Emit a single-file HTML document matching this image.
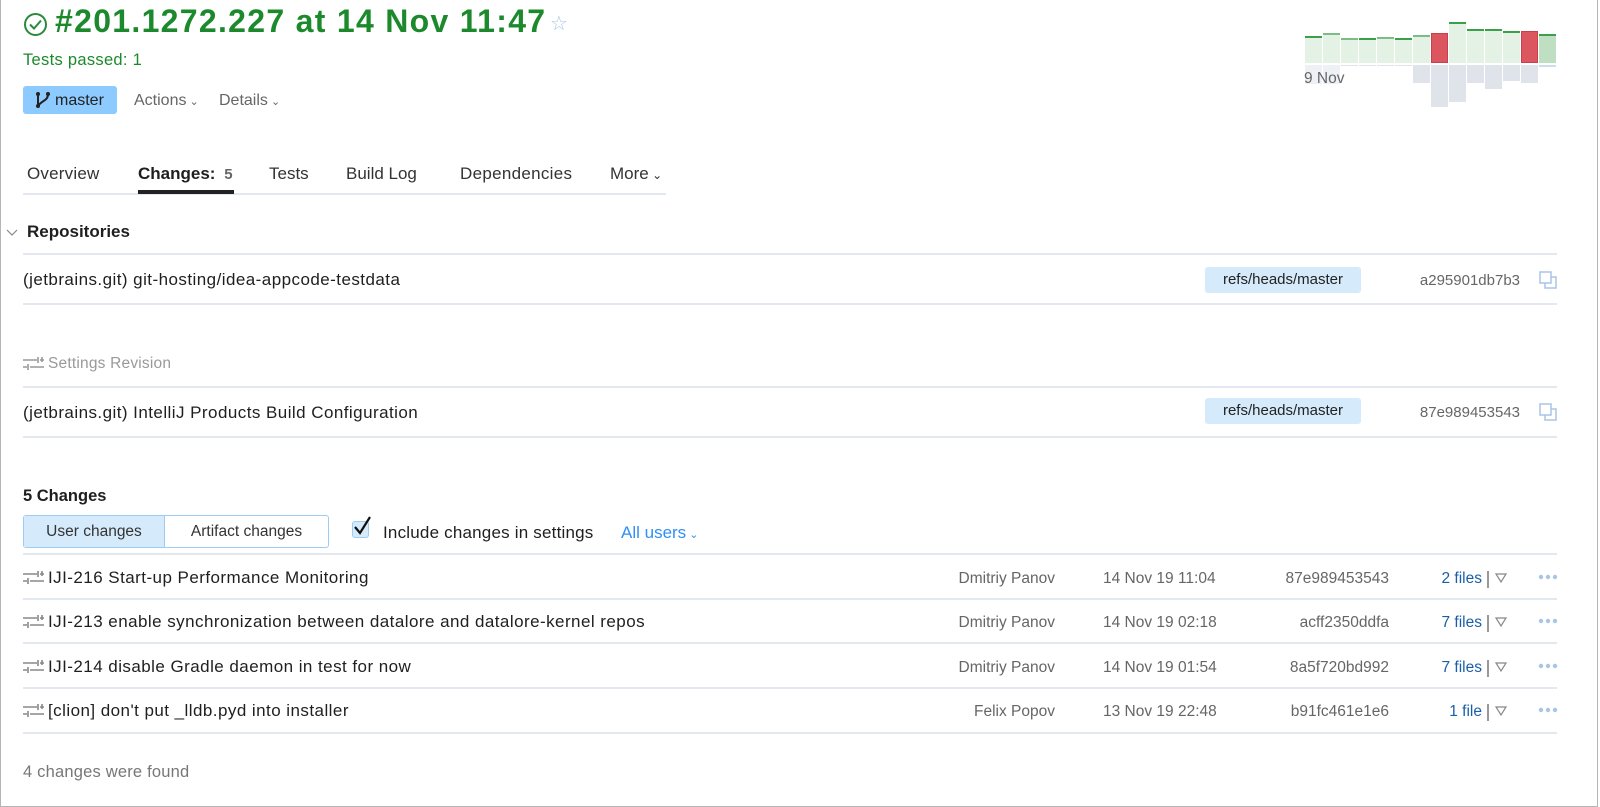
<!DOCTYPE html>
<html><head><meta charset="utf-8"><style>
*{margin:0;padding:0;box-sizing:border-box}
html,body{width:1600px;height:807px;overflow:hidden;background:#fff;font-family:"Liberation Sans",sans-serif;color:#1f1f1f}
.frame{position:absolute;left:0;top:0;width:1598px;height:807px;border:1px solid #b5b5b5;border-top:none}
.a{position:absolute;white-space:nowrap}
.line{position:absolute;left:23px;width:1534px;height:2px;background:#e3e8f0}
.badge{position:absolute;left:1205px;width:156px;height:26px;background:#d5ebfc;border-radius:3px;font-size:15px;line-height:26px;text-align:center;color:#222}
.hash{position:absolute;right:80px;font-size:15px;color:#666}
.copy{position:absolute;left:1539px;width:18px;height:18px}
.row{font-size:17px;letter-spacing:0.45px}
.auth{position:absolute;right:545px;font-size:15.5px;color:#666}
.date{position:absolute;left:1103px;font-size:15.5px;color:#666}
.rh{position:absolute;right:211px;font-size:15.5px;color:#666}
.files{position:absolute;right:118px;font-size:15.5px;color:#1b5ea8}
.sep{position:absolute;left:1487px;width:2px;height:17px;background:#999}
.tri{position:absolute;left:1495px}
.dots{position:absolute;left:1538px}
.bar{position:absolute;width:17px}
</style></head><body>
<div class="frame"></div>

<svg class="a" style="left:23px;top:12px" width="25" height="25" viewBox="0 0 25 25"><circle cx="12.5" cy="12.5" r="10.5" fill="none" stroke="#2a8a3c" stroke-width="2"/><path d="M7 12.5l4 4 7-8" fill="none" stroke="#2a8a3c" stroke-width="2"/></svg>
<div class="a" style="left:55px;top:3px;font-size:32px;font-weight:bold;color:#1c8a2c;letter-spacing:1.3px">#201.1272.227 at 14 Nov 11:47</div>
<div class="a" style="left:550px;top:11px;font-size:20px;color:#a9c5e6">☆</div>
<div class="a" style="left:23px;top:51px;font-size:16.5px;color:#1c8a2c;letter-spacing:0.3px">Tests passed: 1</div>
<div class="a" style="left:23px;top:86px;width:94px;height:28px;background:#8ccaff;border-radius:3px"></div>
<svg class="a" style="left:34px;top:90px" width="18" height="20" viewBox="0 0 18 20"><circle cx="4" cy="4" r="2" fill="#222"/><circle cx="4" cy="16" r="2" fill="#222"/><circle cx="14" cy="4" r="2" fill="#222"/><path d="M4 4v12M14 4c0 7-6 6-10 12" fill="none" stroke="#222" stroke-width="2"/></svg>
<div class="a" style="left:55px;top:92px;font-size:16px;color:#222">master</div>
<div class="a" style="left:134px;top:92px;font-size:16px;color:#666">Actions<span style="font-size:11px"> ⌄</span></div>
<div class="a" style="left:219px;top:92px;font-size:16px;color:#666">Details<span style="font-size:11px"> ⌄</span></div>

<div class="bar" style="left:1305px;top:36px;height:27px;background:#e4f1e5;border-top:2px solid #3aa14a"></div>
<div class="bar" style="left:1323px;top:33px;height:30px;background:#e4f1e5;border-top:2px solid #7bbd85"></div>
<div class="bar" style="left:1341px;top:38px;height:25px;background:#e4f1e5;border-top:2px solid #7bbd85"></div>
<div class="bar" style="left:1359px;top:38px;height:25px;background:#e4f1e5;border-top:2px solid #3aa14a"></div>
<div class="bar" style="left:1377px;top:37px;height:26px;background:#e4f1e5;border-top:2px solid #7bbd85"></div>
<div class="bar" style="left:1395px;top:38px;height:25px;background:#e4f1e5;border-top:2px solid #3aa14a"></div>
<div class="bar" style="left:1413px;top:35px;height:28px;background:#e4f1e5;border-top:2px solid #7bbd85"></div>
<div class="bar" style="left:1431px;top:33px;height:30px;background:#dc5660;border:1px solid #c9404c"></div>
<div class="bar" style="left:1449px;top:22px;height:41px;background:#e4f1e5;border-top:2px solid #3aa14a"></div>
<div class="bar" style="left:1467px;top:29px;height:34px;background:#e4f1e5;border-top:2px solid #3aa14a"></div>
<div class="bar" style="left:1485px;top:29px;height:34px;background:#e4f1e5;border-top:2px solid #3aa14a"></div>
<div class="bar" style="left:1503px;top:31px;height:32px;background:#e4f1e5;border-top:2px solid #3aa14a"></div>
<div class="bar" style="left:1521px;top:31px;height:32px;background:#dc5660;border:1px solid #c9404c"></div>
<div class="bar" style="left:1539px;top:34px;height:29px;background:#bfdfc3;border-top:2px solid #3aa14a"></div>
<div class="bar" style="left:1305px;top:65px;height:19px;background:#edf0f4"></div>
<div class="bar" style="left:1323px;top:65px;height:19px;background:#edf0f4"></div>
<div class="bar" style="left:1341px;top:65px;height:1px;background:#dfe3ea"></div>
<div class="bar" style="left:1359px;top:65px;height:1px;background:#dfe3ea"></div>
<div class="bar" style="left:1377px;top:65px;height:1px;background:#dfe3ea"></div>
<div class="bar" style="left:1395px;top:65px;height:1px;background:#dfe3ea"></div>
<div class="bar" style="left:1413px;top:65px;height:18px;background:#dfe3ea"></div>
<div class="bar" style="left:1431px;top:65px;height:42px;background:#dfe3ea"></div>
<div class="bar" style="left:1449px;top:65px;height:37px;background:#dfe3ea"></div>
<div class="bar" style="left:1467px;top:65px;height:18px;background:#dfe3ea"></div>
<div class="bar" style="left:1485px;top:65px;height:24px;background:#dfe3ea"></div>
<div class="bar" style="left:1503px;top:65px;height:16px;background:#dfe3ea"></div>
<div class="bar" style="left:1521px;top:65px;height:18px;background:#dfe3ea"></div>
<div class="bar" style="left:1539px;top:65px;height:2px;background:#cfdcec"></div>
<div class="a" style="left:1304px;top:70px;font-size:15.5px;color:#666">9 Nov</div>

<div class="a" style="left:23px;top:193px;width:643px;height:2px;background:#e3e8f0"></div>
<div class="a" style="left:27px;top:164px;font-size:17px;color:#333;letter-spacing:0.2px">Overview</div>
<div class="a" style="left:138px;top:164px;font-size:17px;font-weight:bold;color:#1f1f1f">Changes: <span style="color:#666;font-size:15px;margin-left:4px">5</span></div>
<div class="a" style="left:138px;top:190px;width:96px;height:4px;background:#222"></div>
<div class="a" style="left:269px;top:164px;font-size:17px;color:#333">Tests</div>
<div class="a" style="left:346px;top:164px;font-size:17px;color:#333">Build Log</div>
<div class="a" style="left:460px;top:164px;font-size:17px;color:#333;letter-spacing:0.3px">Dependencies</div>
<div class="a" style="left:610px;top:164px;font-size:17px;color:#333">More<span style="font-size:12px"> ⌄</span></div>

<svg class="a" style="left:6px;top:229px" width="12" height="8"><path d="M1 1l5 5 5-5" fill="none" stroke="#888" stroke-width="1.2"/></svg>
<div class="a" style="left:27px;top:222px;font-size:17px;font-weight:bold">Repositories</div>
<div class="line" style="top:253px"></div>
<div class="a row" style="left:23px;top:270px">(jetbrains.git) git-hosting/idea-appcode-testdata</div>
<div class="badge" style="top:267px">refs/heads/master</div>
<div class="hash" style="top:272px">a295901db7b3</div>
<svg class="copy" style="top:271px" viewBox="0 0 18 18"><rect x="1" y="1" width="11" height="11" fill="none" stroke="#a9c5e6" stroke-width="1.5"/><path d="M6 12v5h11V6h-5" fill="none" stroke="#a9c5e6" stroke-width="1.5"/></svg>
<div class="line" style="top:303px"></div>

<svg class="a" style="left:23px;top:356px" width="21" height="16" viewBox="0 0 21 16"><path d="M0 4h14M17 4h4M0 11h4M7 11h14M15 1v6M5 8v6M19 1v5" fill="none" stroke="#999" stroke-width="1.6"/></svg>
<div class="a" style="left:48px;top:355px;font-size:15.5px;color:#999;letter-spacing:0.2px">Settings Revision</div>
<div class="line" style="top:386px"></div>
<div class="a row" style="left:23px;top:403px">(jetbrains.git) IntelliJ Products Build Configuration</div>
<div class="badge" style="top:398px">refs/heads/master</div>
<div class="hash" style="top:404px">87e989453543</div>
<svg class="copy" style="top:403px" viewBox="0 0 18 18"><rect x="1" y="1" width="11" height="11" fill="none" stroke="#a9c5e6" stroke-width="1.5"/><path d="M6 12v5h11V6h-5" fill="none" stroke="#a9c5e6" stroke-width="1.5"/></svg>
<div class="line" style="top:436px"></div>

<div class="a" style="left:23px;top:487px;font-size:16.5px;font-weight:bold">5 Changes</div>
<div class="a" style="left:23px;top:515px;width:306px;height:33px;border:1px solid #9ccbf3;border-radius:3px"></div>
<div class="a" style="left:24px;top:516px;width:141px;height:31px;background:#d5ebfc;border-right:1px solid #9ccbf3;font-size:15.5px;line-height:32px;text-align:center;color:#333">User changes</div>
<div class="a" style="left:165px;top:516px;width:163px;height:31px;font-size:15.5px;line-height:32px;text-align:center;color:#333">Artifact changes</div>
<div class="a" style="left:352px;top:521px;width:17px;height:17px;background:#d5ebfc;border:1px solid #9ccbf3;border-radius:3px"></div>
<svg class="a" style="left:352px;top:515px" width="20" height="22"><path d="M3 12l5 6 10-16" fill="none" stroke="#111" stroke-width="2.2"/></svg>
<div class="a" style="left:383px;top:523px;font-size:17px;letter-spacing:0.2px">Include changes in settings</div>
<div class="a" style="left:621px;top:523px;font-size:17px;color:#2f8ff5">All users<span style="font-size:11px"> ⌄</span></div>
<div class="line" style="top:553px"></div>

<svg class="a" style="left:23px;top:570px" width="21" height="16" viewBox="0 0 21 16"><path d="M0 4h14M17 4h4M0 11h4M7 11h14M15 1v6M5 8v6M19 1v5" fill="none" stroke="#888" stroke-width="1.6"/></svg>
<div class="a row" style="left:48px;top:568px">IJI-216 Start-up Performance Monitoring</div>
<div class="auth" style="top:570px">Dmitriy Panov</div><div class="date" style="top:570px">14 Nov 19 11:04</div><div class="rh" style="top:570px">87e989453543</div><div class="files" style="top:570px">2 files</div><div class="sep" style="top:571px"></div><svg class="tri" style="top:573px" width="12" height="10"><path d="M1 1h10L6 9z" fill="none" stroke="#888" stroke-width="1.2"/></svg><svg class="dots" style="top:574px" width="20" height="6"><circle cx="3" cy="3" r="2.2" fill="#a9c5e6"/><circle cx="10" cy="3" r="2.2" fill="#a9c5e6"/><circle cx="17" cy="3" r="2.2" fill="#a9c5e6"/></svg>
<div class="line" style="top:598px"></div>

<svg class="a" style="left:23px;top:614px" width="21" height="16" viewBox="0 0 21 16"><path d="M0 4h14M17 4h4M0 11h4M7 11h14M15 1v6M5 8v6M19 1v5" fill="none" stroke="#888" stroke-width="1.6"/></svg>
<div class="a row" style="left:48px;top:612px">IJI-213 enable synchronization between datalore and datalore-kernel repos</div>
<div class="auth" style="top:614px">Dmitriy Panov</div><div class="date" style="top:614px">14 Nov 19 02:18</div><div class="rh" style="top:614px">acff2350ddfa</div><div class="files" style="top:614px">7 files</div><div class="sep" style="top:615px"></div><svg class="tri" style="top:617px" width="12" height="10"><path d="M1 1h10L6 9z" fill="none" stroke="#888" stroke-width="1.2"/></svg><svg class="dots" style="top:618px" width="20" height="6"><circle cx="3" cy="3" r="2.2" fill="#a9c5e6"/><circle cx="10" cy="3" r="2.2" fill="#a9c5e6"/><circle cx="17" cy="3" r="2.2" fill="#a9c5e6"/></svg>
<div class="line" style="top:642px"></div>

<svg class="a" style="left:23px;top:659px" width="21" height="16" viewBox="0 0 21 16"><path d="M0 4h14M17 4h4M0 11h4M7 11h14M15 1v6M5 8v6M19 1v5" fill="none" stroke="#888" stroke-width="1.6"/></svg>
<div class="a row" style="left:48px;top:657px">IJI-214 disable Gradle daemon in test for now</div>
<div class="auth" style="top:659px">Dmitriy Panov</div><div class="date" style="top:659px">14 Nov 19 01:54</div><div class="rh" style="top:659px">8a5f720bd992</div><div class="files" style="top:659px">7 files</div><div class="sep" style="top:660px"></div><svg class="tri" style="top:662px" width="12" height="10"><path d="M1 1h10L6 9z" fill="none" stroke="#888" stroke-width="1.2"/></svg><svg class="dots" style="top:663px" width="20" height="6"><circle cx="3" cy="3" r="2.2" fill="#a9c5e6"/><circle cx="10" cy="3" r="2.2" fill="#a9c5e6"/><circle cx="17" cy="3" r="2.2" fill="#a9c5e6"/></svg>
<div class="line" style="top:687px"></div>

<svg class="a" style="left:23px;top:703px" width="21" height="16" viewBox="0 0 21 16"><path d="M0 4h14M17 4h4M0 11h4M7 11h14M15 1v6M5 8v6M19 1v5" fill="none" stroke="#888" stroke-width="1.6"/></svg>
<div class="a row" style="left:48px;top:701px">[clion] don't put _lldb.pyd into installer</div>
<div class="auth" style="top:703px">Felix Popov</div><div class="date" style="top:703px">13 Nov 19 22:48</div><div class="rh" style="top:703px">b91fc461e1e6</div><div class="files" style="top:703px">1 file</div><div class="sep" style="top:704px"></div><svg class="tri" style="top:706px" width="12" height="10"><path d="M1 1h10L6 9z" fill="none" stroke="#888" stroke-width="1.2"/></svg><svg class="dots" style="top:707px" width="20" height="6"><circle cx="3" cy="3" r="2.2" fill="#a9c5e6"/><circle cx="10" cy="3" r="2.2" fill="#a9c5e6"/><circle cx="17" cy="3" r="2.2" fill="#a9c5e6"/></svg>
<div class="line" style="top:732px"></div>

<div class="a" style="left:23px;top:763px;font-size:16.5px;color:#777;letter-spacing:0.2px">4 changes were found</div>
</body></html>
